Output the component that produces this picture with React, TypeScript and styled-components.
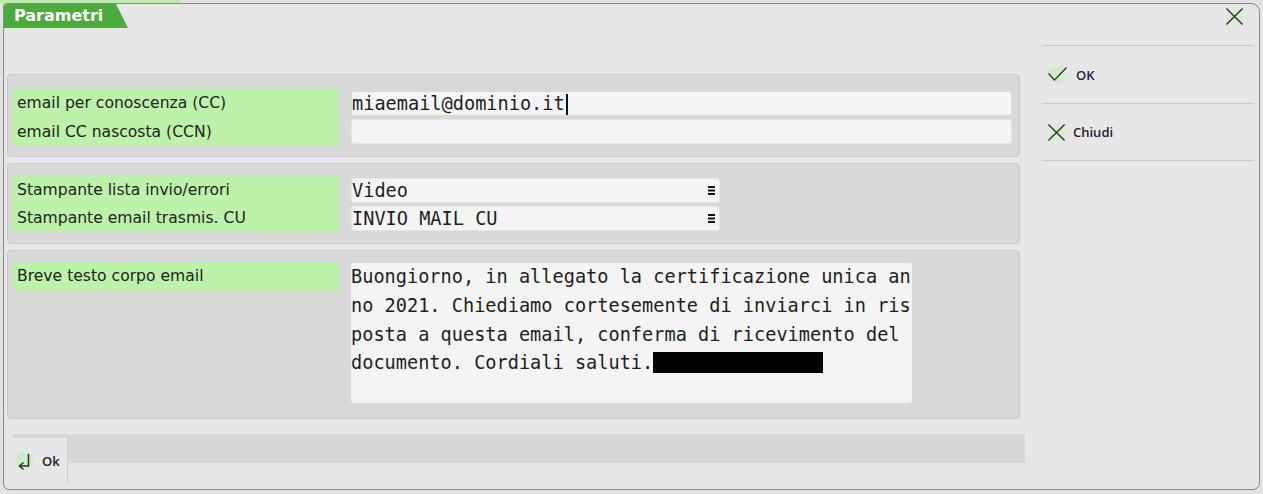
import React from "react";
import styled, { createGlobalStyle } from "styled-components";

const Global = createGlobalStyle`
  html, body { margin: 0; padding: 0; }
  body {
    width: 1263px;
    height: 494px;
    overflow: hidden;
    background: linear-gradient(#b9f0a9, #b9f0a9) 0 0 / 181px 3px no-repeat, #e3e3e3;
    font-family: "Open Sans", "Noto Sans", sans-serif;
    color: #1e1e1e;
  }
  * { box-sizing: border-box; }
`;

const sans = `"DejaVu Sans", "Open Sans", sans-serif`;
const mono = `"DejaVu Sans Mono", "Liberation Mono", monospace`;

const Window = styled.div`
  margin: 3px 0 0 3px;
  width: 1257px;
  height: 487px;
  border: 1px solid #8a8a8a;
  border-radius: 3px 9px 7px 6px;
  background: #e7e7e7;
  display: grid;
  grid-template-columns: 1021px 212px;
  column-gap: 17px;
  overflow: hidden;
`;

const LeftCol = styled.div`
  display: flex;
  flex-direction: column;
`;

const Tab = styled.div`
  height: 24px;
  width: 124px;
  background: #4cab3a;
  clip-path: polygon(0 0, 112px 0, 124px 100%, 0 100%);
  border-top-left-radius: 3px;
  color: #fff;
  font-family: ${sans};
  font-weight: 700;
  font-size: 16px;
  line-height: 24px;
  padding-left: 10px;
`;

const Panels = styled.div`
  margin: 46px 0 0 3px;
  width: 1013px;
  display: flex;
  flex-direction: column;
  gap: 6px;
`;

const Panel = styled.div<{ $pt: number; $pb: number }>`
  border: 1px solid #cbcbcb;
  border-radius: 4px;
  background: #d9d9d9;
  padding: ${(p) => p.$pt}px 7px ${(p) => p.$pb}px 5px;
  display: grid;
  grid-template-columns: 326px 661px;
  column-gap: 12px;
  align-items: start;
`;

const LabelBlock = styled.div<{ $row: number }>`
  background: #bcf2aa;
  padding-left: 4px;
  display: flex;
  flex-direction: column;
  & > div {
    height: ${(p) => p.$row}px;
    line-height: ${(p) => p.$row}px;
    font-family: ${sans};
    font-size: 15.6px;
    color: #222;
    white-space: nowrap;
  }
`;

const Fields = styled.div<{ $row: number }>`
  display: flex;
  flex-direction: column;
  & > div {
    height: ${(p) => p.$row}px;
    display: flex;
    align-items: center;
  }
`;

const Input = styled.div<{ $focus?: boolean; $w?: number }>`
  width: ${(p) => (p.$w ? `${p.$w}px` : "100%")};
  height: 25px;
  background: #f4f4f4;
  border: 1px solid ${(p) => (p.$focus ? "#c3ecb6" : "#e6e6e6")};
  border-radius: 3px;
  font-family: ${mono};
  font-size: 18.6px;
  line-height: 23px;
  color: #1e1e1e;
  display: flex;
  align-items: center;
  justify-content: space-between;
  padding: 0 4px 0 0;
  white-space: pre;
`;

const Caret = styled.span`
  display: inline-block;
  width: 2px;
  height: 21px;
  background: #111;
  vertical-align: middle;
  margin-left: 1px;
`;

const MenuGlyph = styled.svg`
  flex: none;
`;

const TextArea = styled.div`
  margin-top: 1px;
  width: 561px;
  height: 140px;
  background: #f4f4f4;
  border-radius: 3px;
  font-family: ${mono};
  font-size: 18.6px;
  line-height: 28.8px;
  color: #1e1e1e;
  white-space: pre;
`;

const Redact = styled.span`
  display: inline-block;
  width: 170px;
  height: 21px;
  background: #000;
  vertical-align: -4px;
`;

const Footer = styled.div`
  margin: 15px 0 0 9px;
  width: 1012px;
  display: flex;
  flex-direction: column;
`;

const FooterStrip = styled.div`
  height: 4px;
  background: #d8d8d8;
`;

const FooterRow = styled.div`
  display: flex;
  align-items: flex-start;
`;

const FooterButton = styled.div`
  width: 55px;
  height: 46px;
  border-right: 1px solid #cdcdcd;
  display: flex;
  align-items: center;
  gap: 7px;
  padding-left: 2px;
  font-size: 13px;
  font-weight: 600;
`;

const FooterFill = styled.div`
  flex: 1;
  height: 25px;
  background: #d8d8d8;
`;

const RightCol = styled.div`
  display: flex;
  flex-direction: column;
`;

const CloseRow = styled.div`
  height: 41px;
  display: flex;
  justify-content: flex-end;
  padding: 3px 10px 0 0;
`;

const MenuItem = styled.div<{ $last?: boolean }>`
  height: 58px;
  border-top: 1px solid #c9c9c9;
  border-bottom: ${(p) => (p.$last ? "1px solid #c9c9c9" : "none")};
  display: flex;
  align-items: center;
  gap: 7px;
  padding-left: 5px;
  font-size: 13px;
  font-weight: 600;
  color: #1f1f3a;
`;

const Icon = styled.svg`
  flex: none;
  display: block;
`;

const CheckIcon = () => (
  <Icon width="22" height="20" viewBox="0 0 22 20">
    <circle cx="9" cy="10" r="8.5" fill="#cfeec7" />
    <path d="M1.5 8.5 L7.5 15 L19.5 2.5" fill="none" stroke="#3a3a3a" strokeWidth="1.5" />
  </Icon>
);

const XIcon = ({ size = 20 }: { size?: number }) => (
  <Icon width={size} height={size} viewBox="0 0 20 20">
    <circle cx="10" cy="10" r="8.5" fill="#d2efca" />
    <path d="M1.5 1.5 L18.5 18.5 M18.5 1.5 L1.5 18.5" fill="none" stroke="#333" strokeWidth="1.5" />
  </Icon>
);

const EnterIcon = () => (
  <Icon width="20" height="20" viewBox="0 0 20 20">
    <circle cx="10" cy="10" r="9" fill="#cfeec7" />
    <path d="M13.5 3 V15 H5" fill="none" stroke="#333" strokeWidth="1.6" />
    <path d="M8.5 11.5 L4.5 15 L8.5 18.5" fill="none" stroke="#333" strokeWidth="1.6" />
  </Icon>
);

const Hamburger = () => (
  <MenuGlyph width="7" height="9" viewBox="0 0 7 9">
    <rect x="0" y="0" width="7" height="2" fill="#111" />
    <rect x="0" y="3.5" width="7" height="2" fill="#111" />
    <rect x="0" y="7" width="7" height="2" fill="#111" />
  </MenuGlyph>
);

export default function App() {
  return (
    <>
      <Global />
      <Window>
        <LeftCol>
          <Tab>Parametri</Tab>
          <Panels>
            <Panel $pt={14} $pb={10}>
              <LabelBlock $row={28.5}>
                <div>email per conoscenza (CC)</div>
                <div>email CC nascosta (CCN)</div>
              </LabelBlock>
              <Fields $row={28.5}>
                <div>
                  <Input $focus>
                    <span>
                      miaemail@dominio.it
                      <Caret />
                    </span>
                  </Input>
                </div>
                <div>
                  <Input />
                </div>
              </Fields>
            </Panel>
            <Panel $pt={12} $pb={11}>
              <LabelBlock $row={28}>
                <div>Stampante lista invio/errori</div>
                <div>Stampante email trasmis. CU</div>
              </LabelBlock>
              <Fields $row={28}>
                <div>
                  <Input $w={369}>
                    <span>Video</span>
                    <Hamburger />
                  </Input>
                </div>
                <div>
                  <Input $w={369}>
                    <span>INVIO MAIL CU</span>
                    <Hamburger />
                  </Input>
                </div>
              </Fields>
            </Panel>
            <Panel $pt={11} $pb={15}>
              <LabelBlock $row={29}>
                <div>Breve testo corpo email</div>
              </LabelBlock>
              <TextArea>
                {"Buongiorno, in allegato la certificazione unica an\nno 2021. Chiediamo cortesemente di inviarci in ris\nposta a questa email, conferma di ricevimento del\ndocumento. Cordiali saluti."}
                <Redact />
              </TextArea>
            </Panel>
          </Panels>
          <Footer>
            <FooterStrip />
            <FooterRow>
              <FooterButton>
                <EnterIcon />
                <span>Ok</span>
              </FooterButton>
              <FooterFill />
            </FooterRow>
          </Footer>
        </LeftCol>
        <RightCol>
          <CloseRow>
            <XIcon size={19} />
          </CloseRow>
          <MenuItem>
            <CheckIcon />
            <span>OK</span>
          </MenuItem>
          <MenuItem $last>
            <XIcon size={19} />
            <span>Chiudi</span>
          </MenuItem>
        </RightCol>
      </Window>
    </>
  );
}
